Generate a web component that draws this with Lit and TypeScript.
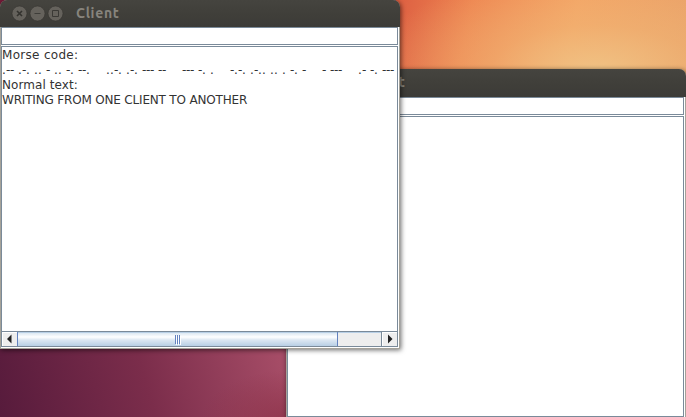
import { LitElement, html, css, svg } from "lit";
import { customElement, property } from "lit/decorators.js";

const MORSE =
  ".-- .-. .. - .. -. --.    ..-. .-. --- --    --- -. .    -.-. .-.. .. . -. -    - ---    .- -. ---";

@customElement("client-window")
class ClientWindow extends LitElement {
  @property({ type: Boolean }) filled = false;

  static styles = css`
    :host {
      --bar: 27px;
      display: grid;
      grid-template-rows: var(--bar) 19px 1fr;
      box-sizing: border-box;
      font-family: "DejaVu Sans", sans-serif;
      font-size: 12px;
      color: #333;
      border-radius: 7px 7px 0 0;
      background: linear-gradient(#fff, #fff) 1px var(--bar) / calc(100% - 2px) calc(100% - var(--bar) - 1px) no-repeat #a5a299;
      box-shadow: 1px 1px 5px rgba(0, 0, 0, 0.6);
    }
    .bar {
      display: flex;
      align-items: center;
      padding-left: 11px;
      border-radius: 7px 7px 0 0;
      background: linear-gradient(#45443f, #403f3a 50%, #3c3b37);
      color: #87847d;
    }
    .bar svg { display: block; flex: none; margin-top: -1px; }
    .title {
      font: bold 14px/20px "Ubuntu", "Noto Sans", sans-serif;
      margin: -2px 0 0 11px;
      letter-spacing: 0.7px;
    }
    .field {
      margin: 0 2px 1px 1px;
      border: 1px solid #7a8a99;
    }
    .area {
      display: flex;
      flex-direction: column;
      margin: 0 2px 2px 1px;
      border: 1px solid #7a8a99;
      min-width: 0;
      overflow: hidden;
    }
    .text { flex: 1; overflow: hidden; padding-top: 1px; }
    .line { height: 15px; line-height: 15px; white-space: pre; }
    .label { letter-spacing: 0.3px; }
    .label2 { letter-spacing: 0.08px; }
    .caps { letter-spacing: -0.18px; }
    .morse { display: flex; }
    .cell { flex: none; width: 4px; }
    .scroll {
      display: flex;
      height: 14px;
      border-top: 1px solid #7a8a99;
      background: #eee;
    }
    .btn { width: 15px; display: flex; box-shadow: inset 1px 1px #fff; }
    .thumb {
      width: 319px;
      display: flex;
      justify-content: center;
      align-items: center;
      gap: 1px;
      border: solid #6382bf;
      border-width: 0 1px;
      background: linear-gradient(#b8cfe5 0 1px, #dce8f2 1px, #fff 5px, #dce7f2 8px, #b8cfe5);
    }
    .grip { width: 1px; height: 9px; background: #6382bf; box-shadow: 1px 1px #fff; }
    .track { flex: 1; border-right: 1px solid #7a8a99; box-shadow: inset 0 1px #b8cfe5; }
  `;

  render() {
    return html`
      <div class="bar">
        <svg width="54" height="18" viewBox="0 0 54 18">
          ${[9, 27, 45].map((x) => svg`<circle cx=${x - 0.5} cy="9.5" r="7.5" fill="#65625c" stroke="#34332f" stroke-width=".6"/>`)}
          <path d="M6 7l5 5M11 7l-5 5" stroke="#33322e" stroke-width="1.6"/>
          <path d="M23.5 9.5h6" stroke="#3e3d39" stroke-width="1"/>
          <path d="M41.5 6.5h6v6h-6z" fill="none" stroke="#3a3935" stroke-width="1"/>
        </svg>
        <span class="title">Client</span>
      </div>
      <div class="field"></div>
      <div class="area">
        ${this.filled
          ? html`
              <div class="text">
                <div class="line label">Morse code:</div>
                <div class="line morse">${[...MORSE].map((c) => html`<span class="cell">${c}</span>`)}</div>
                <div class="line label2">Normal text:</div>
                <div class="line caps">WRITING FROM ONE CLIENT TO ANOTHER</div>
              </div>
              <div class="scroll">
                <div class="btn"><svg width="15" height="14"><path d="M9.5 2.5v9L5 7z" fill="#222"/></svg></div>
                <div class="thumb"><i class="grip"></i><i class="grip"></i><i class="grip"></i></div>
                <div class="track"></div>
                <div class="btn"><svg width="15" height="14"><path d="M6 2.5v9l4.5-4.5z" fill="#222"/></svg></div>
              </div>`
          : ""}
      </div>
    `;
  }
}

@customElement("app-root")
class AppRoot extends LitElement {
  static styles = css`
    :host {
      display: block;
      position: relative;
      width: 686px;
      height: 417px;
      overflow: hidden;
      background:
        radial-gradient(ellipse 230px 100px at 595px 70px, rgba(240, 195, 133, 0.95), rgba(240, 185, 120, 0.5) 45%, transparent) no-repeat,
        radial-gradient(ellipse 90px 50px at 290px 420px, rgba(140, 48, 70, 0.7), transparent) no-repeat,
        linear-gradient(75deg, #571b3c, #7b2d4b 50%, #a54c66 95%) 0 340px / 290px 77px no-repeat,
        linear-gradient(100deg, #dd5f42, #ee8450 25%, #f4a263 60%, #e9a068) 396px 0 / 290px 80px no-repeat,
        #751b38;
    }
    client-window { position: absolute; }
    .back { --bar: 28px; left: 286px; top: 69px; width: 400px; height: 350px; }
    .front { left: 0; top: 0; width: 400px; height: 349px; }
  `;

  render() {
    return html`
      <client-window class="back"></client-window>
      <client-window class="front" filled></client-window>
    `;
  }
}
